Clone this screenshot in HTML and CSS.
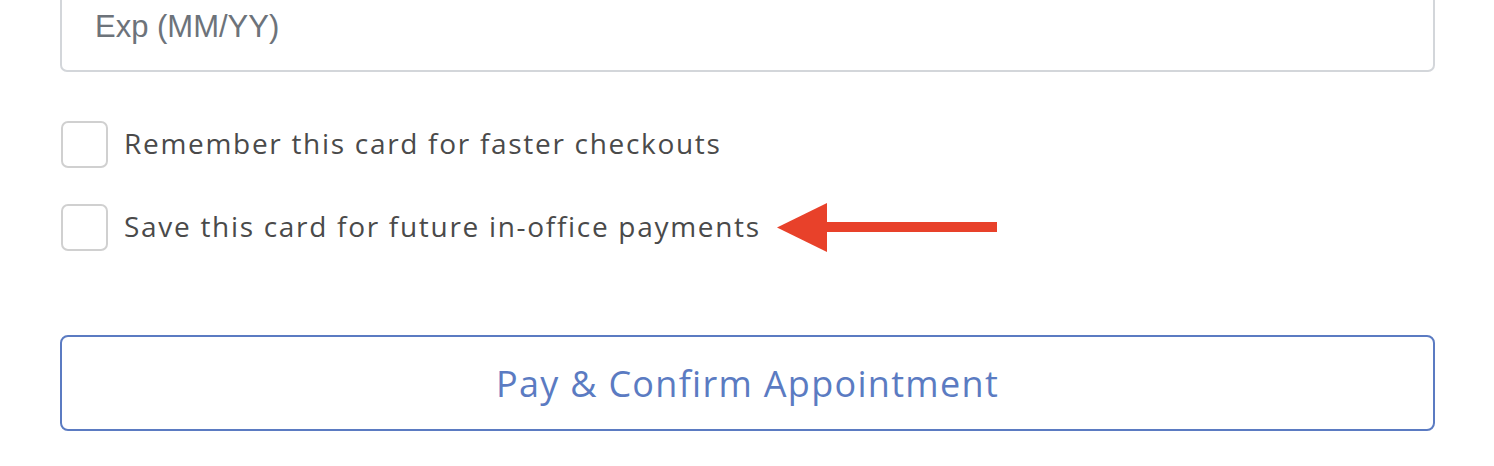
FILE: index.html
```html
<!DOCTYPE html>
<html lang="en">
<head>
    <meta charset="UTF-8">
    <title>Payment</title>
    <link rel="stylesheet" href="styles.css">
</head>
<body>
    <div class="container">
        <form class="pay-form" onsubmit="event.preventDefault();">
            <input type="text" class="field" id="exp" placeholder="Exp (MM/YY)">

            <div class="options">
                <label class="check-row">
                    <input type="checkbox" class="check">
                    <span class="check-text">Remember this card for faster checkouts</span>
                </label>
                <label class="check-row">
                    <input type="checkbox" class="check">
                    <span class="check-text">Save this card for future in-office payments</span>
                    <svg class="arrow" width="220" height="50" viewBox="0 0 220 50">
                        <polygon points="0,24.5 50,0 50,49" fill="#e8412a"/>
                        <rect x="49" y="19" width="171" height="10" fill="#e8412a"/>
                    </svg>
                </label>
            </div>

            <button type="submit" class="pay-btn">Pay &amp; Confirm Appointment</button>
        </form>
    </div>
</body>
</html>
```

FILE: styles.css
```css
body {
    margin: 0;
    background: #fff;
    font-family: "Open Sans", "Liberation Sans", sans-serif;
    overflow: hidden;
}
.container {
    padding: 0 59px 0 60px;
}
.pay-form {
    display: flex;
    flex-direction: column;
}
.field {
    box-sizing: border-box;
    margin-top: -18px;
    height: 90px;
    padding: 0 33px;
    border: 2px solid #d3d6da;
    border-radius: 7px;
    font-family: "Liberation Sans", Arial, sans-serif;
    font-size: 31px;
    color: #333;
    outline: none;
}
.field::placeholder {
    color: #6d737a;
}
.options {
    display: flex;
    flex-direction: column;
    gap: 36px;
    margin-top: 49px;
}
.check-row {
    display: flex;
    align-items: center;
    height: 47px;
}
.check {
    appearance: none;
    -webkit-appearance: none;
    box-sizing: border-box;
    width: 47px;
    height: 47px;
    margin: 0 16px 0 1px;
    border: 2px solid #d0d0d0;
    border-radius: 7px;
    background: #fff;
}
.check-text {
    font-size: 28px;
    letter-spacing: 1.7px;
    color: #4a4a4a;
    margin-top: -3px;
}
.arrow {
    margin-left: 16px;
}
.pay-btn {
    margin-top: 84px;
    height: 96px;
    border: 2px solid #5b7bc2;
    border-radius: 8px;
    background: #fff;
    color: #5b7bc2;
    font-family: "Open Sans", "Liberation Sans", sans-serif;
    font-size: 36px;
    letter-spacing: 1.3px;
    cursor: pointer;
}
```
